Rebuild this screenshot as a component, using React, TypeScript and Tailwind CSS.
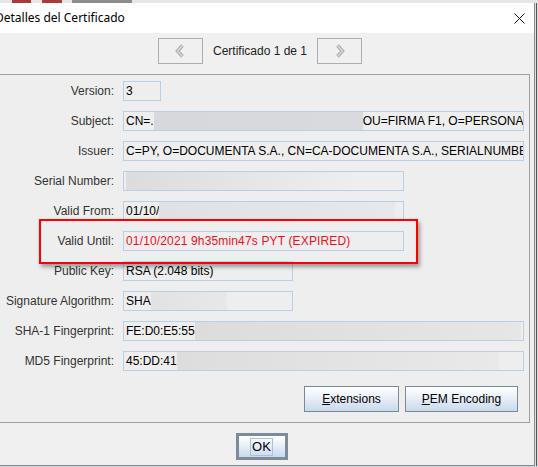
import React from "react";

const font = { fontFamily: '"Liberation Sans", Arial, sans-serif' };

function Blur({ w, from = "#d5d7da", to = "#dcdee1" }: { w: number; from?: string; to?: string }) {
  return (
    <div
      className="h-[18px] shrink-0"
      style={{ width: w, background: `linear-gradient(90deg, ${from}, ${to})` }}
    />
  );
}

function Row({
  label,
  width,
  children,
}: {
  label: string;
  width: number;
  children: React.ReactNode;
}) {
  return (
    <div className="flex items-center h-[20px]">
      <div className="w-[116px] shrink-0 text-right pr-[2px] text-[12px] text-[#333333] whitespace-nowrap">
        {label}
      </div>
      <div
        className="ml-[7px] h-[20px] border border-[#b8cfe5] bg-[#eeeeee] flex items-center pl-[2px] overflow-hidden whitespace-nowrap text-[12px] text-black"
        style={{ width }}
      >
        {children}
      </div>
    </div>
  );
}

function Chevron({ dir }: { dir: "left" | "right" }) {
  return (
    <svg width="10" height="14" viewBox="0 0 10 14">
      <polyline
        points={dir === "left" ? "7.5,1.5 2.5,7 7.5,12.5" : "2.5,1.5 7.5,7 2.5,12.5"}
        fill="none"
        stroke="#a9a9a9"
        strokeWidth="3.4"
      />
      <polyline
        points={dir === "left" ? "7.5,1.5 2.5,7 7.5,12.5" : "2.5,1.5 7.5,7 2.5,12.5"}
        fill="none"
        stroke="#d6d6d6"
        strokeWidth="1.6"
      />
    </svg>
  );
}

function JButton({ children, w }: { children: React.ReactNode; w: number }) {
  return (
    <div
      className="h-[26px] border border-[#7a8a99] flex items-center justify-center text-[12px] text-black"
      style={{ width: w, background: "linear-gradient(180deg, #ffffff 0%, #eef3f9 35%, #c9d9ec 100%)" }}
    >
      {children}
    </div>
  );
}

export default function App() {
  return (
    <div className="w-[538px] h-[467px] overflow-hidden bg-[#cfd3d6] relative" style={font}>
      {/* background strip at top */}
      <div className="h-[3px] bg-[#e6e6e6] flex">
        <div className="w-[12px]" />
        <div className="w-[19px] bg-[#a83a3a]" />
        <div className="w-[11px]" />
        <div className="w-[20px] bg-[#a83a3a]" />
        <div className="w-[10px]" />
        <div className="w-[60px] bg-[#8c8c8c]" />
      </div>
      <div className="flex">
        {/* window */}
        <div className="w-[535px] h-[463px] flex flex-col border-r border-b border-[#8a8a8a] bg-[#f0f0f0]">
          {/* title bar */}
          <div className="h-[30px] bg-white flex items-center justify-between shrink-0">
            <div
              className="ml-[-5px] text-[12px] text-black"
              style={{ fontFamily: '"Noto Sans", "Open Sans", sans-serif' }}
            >
              Detalles del Certificado
            </div>
            <svg width="11" height="11" viewBox="0 0 11 11" className="mr-[9px]">
              <line x1="0.5" y1="0.5" x2="10.5" y2="10.5" stroke="#111" strokeWidth="1" />
              <line x1="10.5" y1="0.5" x2="0.5" y2="10.5" stroke="#111" strokeWidth="1" />
            </svg>
          </div>
          {/* nav */}
          <div className="flex justify-center items-center pt-[5px] pr-[14px] shrink-0">
            <div className="w-[45px] h-[26px] border border-[#adadad] flex items-center justify-center">
              <Chevron dir="left" />
            </div>
            <div className="px-[10px] text-[12px] text-[#222]">Certificado 1 de 1</div>
            <div className="w-[45px] h-[26px] border border-[#adadad] flex items-center justify-center">
              <Chevron dir="right" />
            </div>
          </div>
          {/* panel */}
          <div className="mt-[10px] ml-[-1px] w-[531px] h-[349px] border border-[#a0a0a0] bg-[#eeeeee] flex flex-col pt-[6px] shrink-0">
            <div className="flex flex-col gap-[10px]">
              <Row label="Version:" width={38}>
                3
              </Row>
              <Row label="Subject:" width={401}>
                <span>CN=.</span>
                <Blur w={209} from="#d6d8db" to="#d8dadd" />
                <span>OU=FIRMA F1, O=PERSONA</span>
              </Row>
              <Row label="Issuer:" width={401}>
                C=PY, O=DOCUMENTA S.A., CN=CA-DOCUMENTA S.A., SERIALNUMBER=RUC80050172-1
              </Row>
              <Row label="Serial Number:" width={281}>
                <Blur w={230} from="#dcdcdc" to="#eeeeee" />
              </Row>
              <Row label="Valid From:" width={281}>
                <span>01/10/</span>
                <Blur w={236} from="#dfe1e4" to="#e6e8eb" />
              </Row>
              <Row label="Valid Until:" width={281}>
                <span className="text-[#f0101e] tracking-[0.15px]">01/10/2021 9h35min47s PYT (EXPIRED)</span>
              </Row>
              <Row label="Public Key:" width={170}>
                RSA (2.048 bits)
              </Row>
              <Row label="Signature Algorithm:" width={170}>
                <span>SHA</span>
                <Blur w={76} from="#e2e2e2" to="#e8e8e8" />
              </Row>
              <Row label="SHA-1 Fingerprint:" width={401}>
                <span>FE:D0:E5:55</span>
                <Blur w={326} from="#dcdcdc" to="#e6e6e6" />
              </Row>
              <Row label="MD5 Fingerprint:" width={401}>
                <span>45:DD:41</span>
                <Blur w={322} from="#dddddd" to="#e9e9e9" />
              </Row>
            </div>
            <div className="flex justify-end gap-[6px] pr-[11px] mt-[15px]">
              <JButton w={95}>
                <span>
                  <span className="underline">E</span>xtensions
                </span>
              </JButton>
              <JButton w={113}>
                <span>
                  <span className="underline">P</span>EM Encoding
                </span>
              </JButton>
            </div>
          </div>
          {/* OK */}
          <div className="flex justify-center pt-[10px] pr-[11px]">
            <div
              className="w-[52px] h-[27px] border-[3px] border-[#7d8c9b] flex items-center justify-center"
              style={{ background: "linear-gradient(180deg, #ffffff 0%, #eef3f9 35%, #c9d9ec 100%)" }}
            >
              <span className="border border-[#a9c1dc] px-[1px] text-[13px] leading-[16px] text-black">OK</span>
            </div>
          </div>
        </div>
        <div className="w-[3px] h-[463px] flex">
          <div className="w-[1px] bg-[#e0e0e0]" />
          <div className="w-[1px] bg-[#555]" />
          <div className="w-[1px] bg-[#dcdcdc]" />
        </div>
      </div>
      {/* red highlight overlay */}
      <div
        className="absolute left-[39px] top-[219px] w-[379px] h-[45px] border-[2px] border-[#ff0000]"
        style={{ boxShadow: "2px 3px 4px rgba(0,0,0,0.35)" }}
      />
    </div>
  );
}
